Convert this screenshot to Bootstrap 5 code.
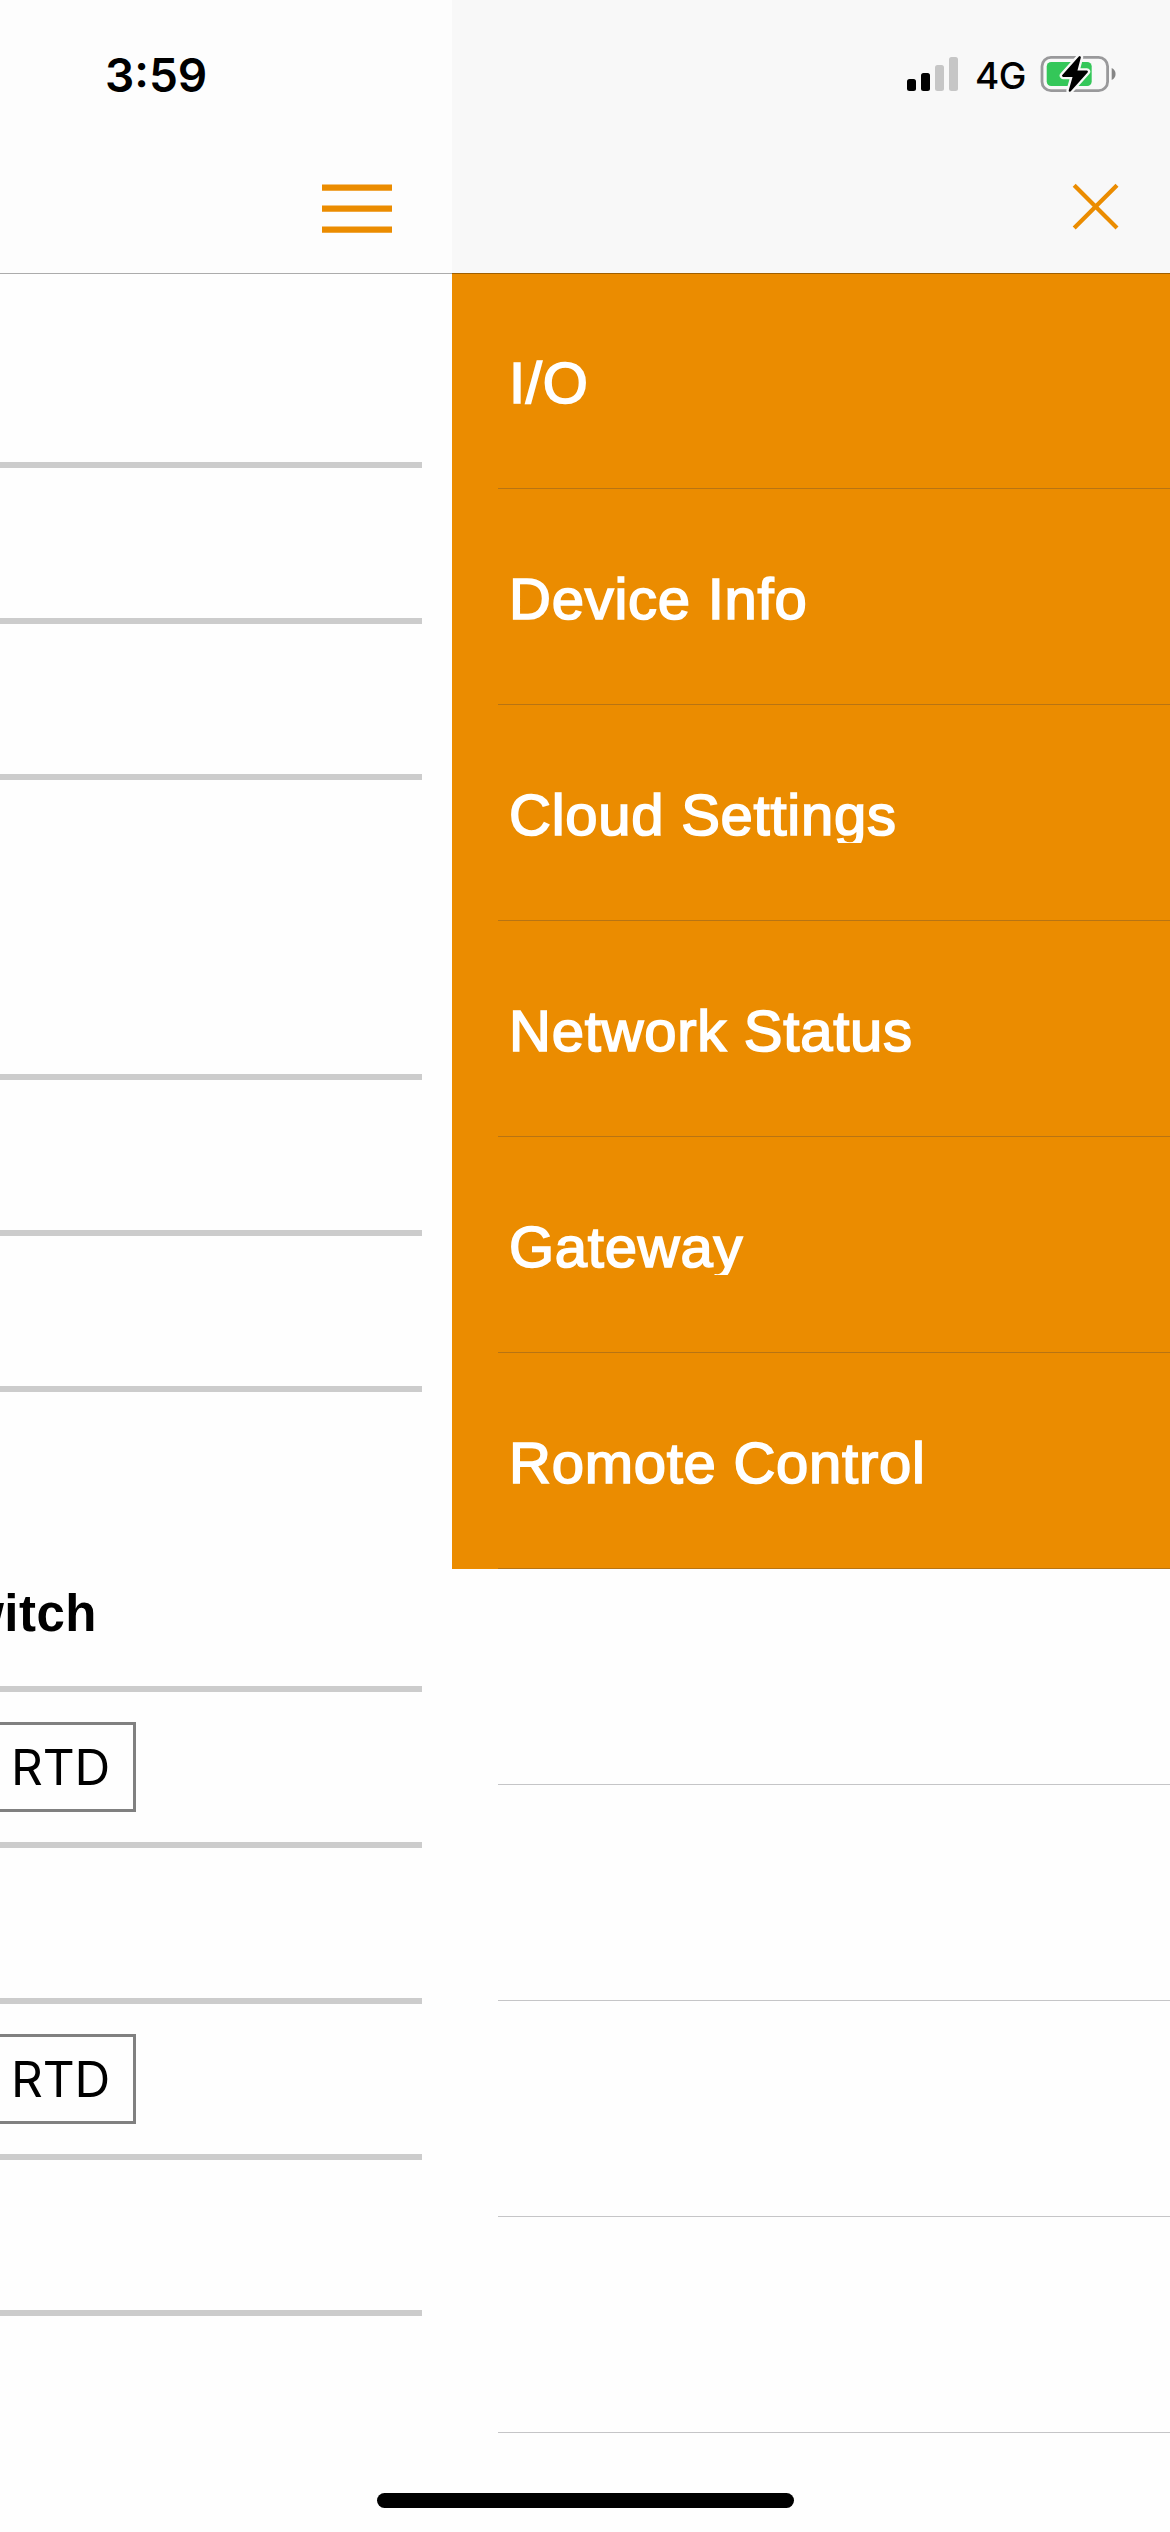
<!DOCTYPE html>
<html lang="en">
<head>
<meta charset="utf-8">
<meta name="viewport" content="width=device-width, initial-scale=1">
<title>Device menu</title>
<link href="https://cdn.jsdelivr.net/npm/bootstrap@5.3.0/dist/css/bootstrap.min.css" rel="stylesheet">
<style>
  :root { --brand: #eb8c00; }
  body { width: 1170px; height: 2532px; background: #fefefe; color: #000; font-family: "Liberation Sans", sans-serif; }
  svg { display: block; }

  .status-strip { height: 150px; z-index: 3; font-family: Inter, sans-serif; }
  .clock { font-size: 46px; font-weight: 600; line-height: 56px; padding: 47px 0 0 105px; letter-spacing: 0; }
  .status-icons { padding: 55px 54px 0 0; }
  .network { font-size: 37px; font-weight: 500; line-height: 38px; width: 50px; margin: 2px 15px 0 16px; letter-spacing: -.6px; }

  .top-bar { height: 273px; box-shadow: 0 1px rgba(0,0,0,.32); z-index: 2; color: var(--brand); }
  .bar-page { background: #fdfdfd; padding: 0 60px 40px 0; }
  .bar-drawer { background: #f8f8f8; padding: 0 51px 43px 0; }
  .icon-btn { padding: 0; border: 0; background: none; color: inherit; }

  .page { width: 452px; }
  .field { height: 156px; margin-right: 30px; border-bottom: 6px solid #ccc; }
  .field-first { height: 195px; }
  .field-tall { height: 300px; }
  .column-title { width: 97px; padding-bottom: 42px; font-size: 51px; line-height: 60px; letter-spacing: .5px; }
  .choice { width: 136px; height: 90px; border: 3px solid #808080; border-left: 0; padding-right: 23px; font: 400 49.5px/84px Inter, sans-serif; letter-spacing: -.2px; }

  .drawer { width: 718px; }
  .menu-cell { height: 216px; padding: 0 0 0 57px; background: #fefefe; border: 0; border-radius: 0; }
  .menu-cell.filled { background: var(--brand); color: #fff; }
  .menu-cell::after { content: ""; position: absolute; left: 46px; right: 0; bottom: 0; height: 1px; background: rgba(60,60,67,.29); }
  .menu-label { height: 60px; padding: 2px 4px 0 0; line-height: 60px; font-size: 58px; overflow: hidden; white-space: nowrap; letter-spacing: .75px; -webkit-text-stroke: 1.7px #fff; }

  .home-bar { left: 377px; top: 2493px; width: 417px; height: 15px; border-radius: 8px; background: #000; z-index: 4; }
</style>
<script src="https://cdn.jsdelivr.net/npm/bootstrap@5.3.0/dist/js/bootstrap.bundle.min.js"></script>
</head>
<body class="position-relative overflow-hidden">

<div class="status-strip position-absolute top-0 start-0 w-100 d-flex justify-content-between align-items-start">
  <div class="clock">3:59</div>
  <div class="status-icons d-flex align-items-start">
    <svg width="52" height="38" viewBox="0 0 52 38">
      <rect x="0" y="24" width="9" height="12" rx="2.5"/>
      <rect x="14" y="18" width="9" height="18" rx="2.5"/>
      <rect x="28" y="10" width="9" height="26" rx="2.5" fill="#c6c6c6"/>
      <rect x="42" y="2" width="9" height="34" rx="2.5" fill="#c6c6c6"/>
    </svg>
    <div class="network">4G</div>
    <svg width="76" height="40" viewBox="0 0 76 40" overflow="visible">
      <g transform="translate(.7)">
        <rect x="1.3" y="2.3" width="65.6" height="33.4" rx="9" fill="none" stroke="#99999b" stroke-width="2.8"/>
        <path d="M71 13a6.6 6.6 0 0 1 0 12z" fill="#858585"/>
        <rect x="6" y="7" width="45" height="24" rx="4.5" fill="#34c759"/>
        <path d="M39 2.3 22.5 20.7h11L29.2 35.5 46 16.7H35.2Z" stroke="#f8f8f8" stroke-width="7" stroke-linejoin="round"/>
        <path d="M39 2.3 22.5 20.7h11L29.2 35.5 46 16.7H35.2Z" stroke="#000" stroke-width="2.4" stroke-linejoin="round"/>
      </g>
    </svg>
  </div>
</div>

<div class="d-flex h-100">
  <main class="page flex-shrink-0">
    <div class="top-bar bar-page position-relative d-flex justify-content-end align-items-end">
      <button class="icon-btn" type="button" aria-label="Menu">
        <svg width="70" height="49" viewBox="0 0 70 49" fill="currentColor">
          <path d="M0 .4h70v6.4H0zM0 21.4h70v6.4H0zM0 42.4h70v6.4H0z"/>
        </svg>
      </button>
    </div>
    <div class="field field-first"></div>
    <div class="field"></div>
    <div class="field"></div>
    <div class="field field-tall"></div>
    <div class="field"></div>
    <div class="field"></div>
    <div class="field field-tall d-flex align-items-end">
      <div class="column-title d-flex justify-content-end fw-bold"><span>Switch</span></div>
    </div>
    <div class="field d-flex align-items-center"><div class="choice d-flex justify-content-end">RTD</div></div>
    <div class="field"></div>
    <div class="field d-flex align-items-center"><div class="choice d-flex justify-content-end">RTD</div></div>
    <div class="field"></div>
  </main>

  <aside class="drawer flex-shrink-0">
    <div class="top-bar bar-drawer position-relative d-flex justify-content-end align-items-end">
      <button class="icon-btn" type="button" aria-label="Close">
        <svg width="47" height="47" viewBox="0 0 47 47" fill="none" stroke="currentColor" stroke-width="4.2">
          <path d="M2.2 2.2l42.8 42.8M45 2.2L2.2 45"/>
        </svg>
      </button>
    </div>
    <nav class="list-group list-group-flush rounded-0">
      <a class="list-group-item menu-cell filled d-flex align-items-center"><span class="menu-label">I/O</span></a>
      <a class="list-group-item menu-cell filled d-flex align-items-center"><span class="menu-label">Device Info</span></a>
      <a class="list-group-item menu-cell filled d-flex align-items-center"><span class="menu-label">Cloud Settings</span></a>
      <a class="list-group-item menu-cell filled d-flex align-items-center"><span class="menu-label">Network Status</span></a>
      <a class="list-group-item menu-cell filled d-flex align-items-center"><span class="menu-label">Gateway</span></a>
      <a class="list-group-item menu-cell filled d-flex align-items-center"><span class="menu-label">Romote Control</span></a>
      <div class="list-group-item menu-cell"></div>
      <div class="list-group-item menu-cell"></div>
      <div class="list-group-item menu-cell"></div>
      <div class="list-group-item menu-cell"></div>
    </nav>
  </aside>
</div>

<div class="home-bar position-absolute"></div>
</body>
</html>
